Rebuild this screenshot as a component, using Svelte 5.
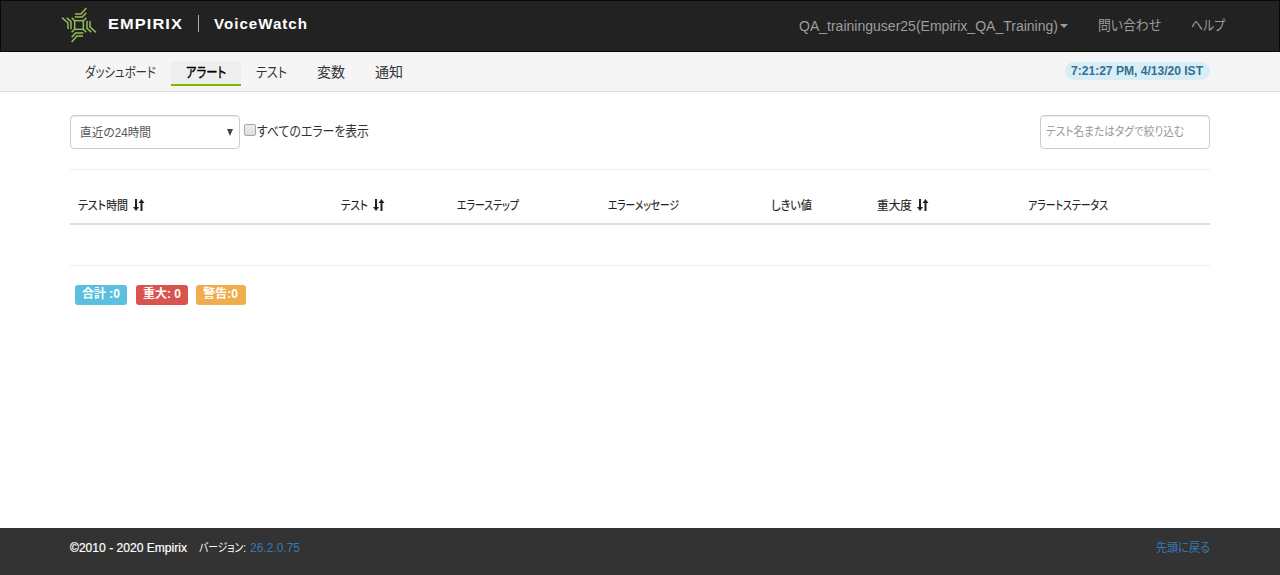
<script>
  const nav = [
    { text: 'ダッシュボード', w: 71 },
    { text: 'アラート', w: 40, active: true },
    { text: 'テスト', w: 31 },
    { text: '変数', w: 28 },
    { text: '通知', w: 28 }
  ];
  const columns = [
    { text: 'テスト時間', w: 50, col: 263, sort: true },
    { text: 'テスト', w: 27, col: 116, sort: true },
    { text: 'エラーステップ', w: 62, col: 151 },
    { text: 'エラーメッセージ', w: 71, col: 163 },
    { text: 'しきい値', w: 41, col: 106 },
    { text: '重大度', w: 35, col: 151, sort: true },
    { text: 'アラートステータス', w: 80, col: 190 }
  ];
  const counts = [
    { text: '合計 :0', w: 38, kind: 'info' },
    { text: '重大: 0', w: 38, kind: 'danger' },
    { text: '警告:0', w: 35, kind: 'warning' }
  ];

  // Condenses a label horizontally to the given width.
  function fit(node, width) {
    const apply = () => {
      node.style.transform = 'none';
      const natural = node.getBoundingClientRect().width;
      node.style.transform = `scaleX(${width / natural})`;
      node.style.marginRight = `${width - natural}px`;
    };
    apply();
    document.fonts.ready.then(apply);
  }
</script>

{#snippet sortIcon()}
  <svg class="sort" width="13" height="12" viewBox="0 0 13 12">
    <path d="M3 0h2v8h2L4 12 1 8h2zM8.5 12V4h-2l3-4 3 4h-2v8z" fill="#222" />
  </svg>
{/snippet}

<div class="page">
  <header>
    <div class="brand">
      <svg class="logo" width="36" height="36" viewBox="-54 -54 108 108" fill="none" stroke="#94bd5b" stroke-width="4.4">
        <rect x="-13" y="-13" width="26" height="26" />
        {#each [0, 90, 180, 270] as angle}
          <path transform={`rotate(${angle})`} d="M-12-33H6L22-51M-13-24H10L22-37M13-13L22-22" />
        {/each}
      </svg>
      <span class="empirix" use:fit={75}>EMPIRIX</span>
      <i class="divider"></i>
      <span class="product" use:fit={94}>VoiceWatch</span>
    </div>
    <div class="account">
      <span class="user"><span use:fit={259}>QA_traininguser25(Empirix_QA_Training)</span><i class="caret"></i></span>
      <span class="contact" use:fit={63}>問い合わせ</span>
      <span class="help" use:fit={34}>ヘルプ</span>
    </div>
  </header>

  <nav>
    <div class="tabs">
      {#each nav as item}
        <a class:active={item.active} href="#top"><span use:fit={item.w}>{item.text}</span></a>
      {/each}
    </div>
    <span class="clock"><span use:fit={132}>7:21:27 PM, 4/13/20 IST</span></span>
  </nav>

  <main>
    <div class="filters">
      <div class="field select">
        <span use:fit={71}>直近の24時間</span>
        <svg width="6" height="7" viewBox="0 0 6 7"><path d="M0 0h6L3 7z" fill="#444" /></svg>
      </div>
      <i class="check"></i>
      <span class="all" use:fit={112}>すべてのエラーを表示</span>
      <div class="field search"><span use:fit={138}>テスト名またはタグで絞り込む</span></div>
    </div>

    <div class="heads">
      {#each columns as c}
        <div class="head" style:width={`${c.col}px`}>
          <span use:fit={c.w}>{c.text}</span>
          {#if c.sort}{@render sortIcon()}{/if}
        </div>
      {/each}
    </div>

    <div class="counts">
      {#each counts as c}
        <span class={['label', c.kind]}><span use:fit={c.w}>{c.text}</span></span>
      {/each}
    </div>
  </main>

  <footer>
    <span class="copy" use:fit={117}>©2010 - 2020 Empirix</span>
    <span class="version" use:fit={47}>バージョン:</span>
    <a class="number" href="#top"><span use:fit={50}>26.2.0.75</span></a>
    <a class="back" href="#top"><span use:fit={54}>先頭に戻る</span></a>
  </footer>
</div>

<style>
  :global(body) { margin: 0; }
  * { box-sizing: border-box; }
  .page {
    display: flex;
    flex-direction: column;
    height: 575px;
    background: #fff;
    color: #333;
    font: 14px/20px "Liberation Sans", "Noto Sans CJK JP", sans-serif;
    font-feature-settings: "palt";
    overflow: hidden;
  }
  span { display: inline-block; white-space: nowrap; transform-origin: 0 50%; flex: none; }
  a { color: inherit; text-decoration: none; }
  i { display: block; flex: none; }
  svg { display: block; flex: none; }

  header {
    display: flex;
    justify-content: space-between;
    height: 52px;
    padding: 0 54px 0 61px;
    background: #222;
    border: 1px solid #080808;
    flex: none;
  }
  .brand { display: flex; align-items: flex-start; color: #fff; font-weight: bold; }
  .logo { margin: 6px 0 0 -1px; }
  .brand span { font-size: 15px; letter-spacing: 1px; margin-top: 13px; }
  .empirix { margin-left: 11px; }
  .divider { width: 1px; height: 17px; margin: 14px 15px 0 15px; background: #aaa; }
  .account { display: flex; color: #9d9d9d; padding-top: 15px; }
  .user { display: flex; align-items: center; height: 20px; margin-right: 30px; }
  .caret { margin-left: 2px; border: 4px solid transparent; border-top-color: #9d9d9d; border-bottom: 0; }
  .contact { margin-top: -1px; }
  .help { margin: -1px 0 0 30px; }

  nav {
    display: flex;
    justify-content: space-between;
    height: 40px;
    padding: 10px 70px 0;
    background: #f5f5f5;
    border-bottom: 1px solid #ddd;
    flex: none;
  }
  .tabs { display: flex; }
  .tabs a { display: flex; height: 24px; padding: 0 15px; border-bottom: 2px solid transparent; }
  .tabs .active { background: #eee; border-color: #7fba00; color: #000; }
  .tabs .active span { -webkit-text-stroke: 0.4px #000; }
  .clock {
    height: 18px;
    padding: 0 7px 0 6px;
    border-radius: 9px;
    background: #d9edf7;
    color: #31708f;
    font-size: 12px;
    line-height: 18px;
    font-weight: bold;
  }

  main { width: 1140px; margin: 0 auto; flex: 1; }
  .filters { display: flex; height: 78px; padding-top: 23px; border-bottom: 1px solid #eee; }
  .field {
    display: flex;
    align-items: center;
    width: 170px;
    height: 34px;
    border: 1px solid #ccc;
    border-radius: 4px;
    font-size: 12px;
    box-shadow: inset 0 1px 1px rgba(0, 0, 0, 0.075);
  }
  .select { justify-content: space-between; padding: 1px 6px 0 9px; color: #555; }
  .search { margin-left: auto; padding-left: 5px; color: #999; }
  .check {
    width: 12px;
    height: 12px;
    margin: 9px 1px 0 4px;
    border: 1px solid #a5a5a5;
    border-radius: 2px;
    background: linear-gradient(#eee, #ddd);
  }
  .all { height: 20px; margin-top: 6px; }

  .heads { display: flex; height: 55px; padding-left: 8px; border-bottom: 2px solid #ddd; font-size: 12px; color: #222; }
  .head { display: flex; flex: none; padding-top: 26px; }
  .head span { -webkit-text-stroke: 0.15px #222; }
  .sort { margin: 3px 0 0 4px; }

  .counts { display: flex; gap: 9px; margin-top: 40px; padding: 19px 5px 0; border-top: 1px solid #eee; }
  .label {
    height: 20px;
    padding: 0 7px;
    border-radius: 3px;
    color: #fff;
    font-size: 12px;
    line-height: 18px;
    font-weight: bold;
  }
  .info { background: #5bc0de; }
  .danger { background: #d9534f; }
  .warning { background: #f0ad4e; margin-left: -1px; padding-right: 8px; }

  footer {
    display: flex;
    height: 47px;
    padding: 10px 70px 0;
    background: #333;
    color: #fff;
    font-size: 12px;
    flex: none;
  }
  .copy { -webkit-text-stroke: 0.2px #fff; }
  .version { margin-left: 12px; }
  .number, .back { color: #337ab7; }
  .number { margin-left: 4px; }
  .back { margin-left: auto; }
</style>
